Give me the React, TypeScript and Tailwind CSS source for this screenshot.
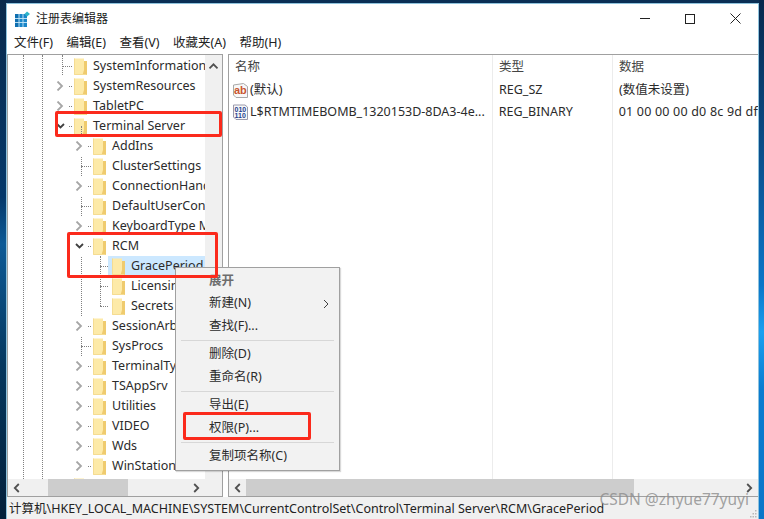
const font = "font-['Noto_Sans','Noto_Sans_CJK_SC',sans-serif]";

function Folder() {
  return (
    <svg width="13" height="17" viewBox="0 0 13 17" className="shrink-0">
      <path d="M0 0.5 H10 V3 H13 V17 H0 Z" fill="#fdeaa8" />
      <path d="M10 0.5 V12 L8.5 17 H13 V3 H10 Z" fill="#efcb6e" />
      <path d="M0.5 0.5 V16.5 H12.5" fill="none" stroke="#f5dc92" />
    </svg>
  );
}

function Chevron({ open }: { open?: boolean }) {
  return (
    <svg width="10" height="10" viewBox="0 0 10 10" className="shrink-0">
      {open ? (
        <path d="M2 3 L5.5 6.5 L9 3" fill="none" stroke="#404040" strokeWidth="1.8" />
      ) : (
        <path d="M2.5 0.5 L7 5 L2.5 9.5" fill="none" stroke="#a6a6a6" strokeWidth="1.8" />
      )}
    </svg>
  );
}

type Row = { t: string; lv: 3 | 4 | 5; c?: "open" | "closed"; sel?: boolean };

const rows: Row[] = [
  { t: "SystemInformation", lv: 3 },
  { t: "SystemResources", lv: 3, c: "closed" },
  { t: "TabletPC", lv: 3, c: "closed" },
  { t: "Terminal Server", lv: 3, c: "open" },
  { t: "AddIns", lv: 4, c: "closed" },
  { t: "ClusterSettings", lv: 4 },
  { t: "ConnectionHandler", lv: 4, c: "closed" },
  { t: "DefaultUserConfiguration", lv: 4 },
  { t: "KeyboardType Mapping", lv: 4, c: "closed" },
  { t: "RCM", lv: 4, c: "open" },
  { t: "GracePeriod", lv: 5, sel: true },
  { t: "Licensing Core", lv: 5 },
  { t: "Secrets", lv: 5 },
  { t: "SessionArbitration", lv: 4, c: "closed" },
  { t: "SysProcs", lv: 4 },
  { t: "TerminalTypes", lv: 4, c: "closed" },
  { t: "TSAppSrv", lv: 4, c: "closed" },
  { t: "Utilities", lv: 4, c: "closed" },
  { t: "VIDEO", lv: 4, c: "closed" },
  { t: "Wds", lv: 4, c: "closed" },
  { t: "WinStations", lv: 4, c: "closed" },
  { t: "", lv: 3 },
];

const padFor = { 3: "pl-[47px]", 4: "pl-[66px]", 5: "pl-[85px]" };

function TreeRow({ r }: { r: Row }) {
  return (
    <div className={`flex h-5 items-center whitespace-nowrap ${padFor[r.lv]}`}>
      <span className="flex h-5 w-[19px] shrink-0 items-center">
        {r.c ? (
          <>
            <span className="relative flex h-5 w-[14px] shrink-0 items-center bg-white">
              <Chevron open={r.c === "open"} />
            </span>
            <span className="h-0 w-[3px] border-t border-dotted border-[#808080]" />
          </>
        ) : r.t ? (
          <>
            <span className="w-[7px] shrink-0" />
            <span className={`h-0 border-t border-dotted border-[#808080] ${r.lv === 5 ? "w-[8px]" : "w-[10px]"}`} />
          </>
        ) : null}
      </span>
      <span className={`flex h-5 items-center ${r.sel ? "-ml-[4px] bg-[#cce8ff] pl-[4px]" : ""}`}>
        <Folder />
        <span className="pl-[6px] pr-[4px] text-[12.5px] text-[#2b2b2b]">{r.t}</span>
      </span>
    </div>
  );
}

function DotLine({ x, top, h }: { x: string; top: string; h: string }) {
  return <div className={`absolute border-l border-dotted border-[#808080] ${x} ${top} ${h}`} />;
}

function MenuItem({ t, arrow, dim }: { t: string; arrow?: boolean; dim?: boolean }) {
  return (
    <div className={`flex h-[22.5px] items-center justify-between pl-[33px] pr-[10px] text-[12.5px] ${dim ? "font-semibold text-[#6d6d6d]" : "text-[#2b2b2b]"}`}>
      <span>{t}</span>
      {arrow && (
        <svg width="6" height="10" viewBox="0 0 6 10">
          <path d="M1 1 L5 5 L1 9" fill="none" stroke="#404040" />
        </svg>
      )}
    </div>
  );
}

function Sep() {
  return <div className="mx-[5px] mb-[3px] mt-[2px] border-t border-[#d7d7d7]" />;
}

function Chevron2() {
  return (
    <svg width="7" height="10" viewBox="0 0 7 10">
      <path d="M1.2 1 L5.2 5 L1.2 9" fill="none" stroke="#505050" strokeWidth="1.8" />
    </svg>
  );
}

function ScrollH({ thumbClass, corner }: { thumbClass: string; corner?: boolean }) {
  return (
    <div className="flex h-[17px] shrink-0 items-center bg-[#f0f0f0]">
      <span className="flex w-[17px] shrink-0 rotate-180 justify-center"><Chevron2 /></span>
      <div className="h-full flex-1">
        <div className={`h-full bg-[#cdcdcd] ${thumbClass}`} />
      </div>
      <span className="flex w-[17px] shrink-0 justify-center"><Chevron2 /></span>
      {corner && <span className="w-[17px] shrink-0" />}
    </div>
  );
}

export default function App() {
  return (
    <div className={`${font} flex h-[519px] w-[764px] overflow-hidden bg-[#0a2f55] pt-[3px]`}>
      <div className="-mt-[3px] w-[6px] shrink-0 bg-[linear-gradient(to_bottom,#0a2a4c_0%,#05386a_38%,#0d5a96_47%,#05385f_70%,#031f3a_100%)]" />
      <div className="relative flex min-w-0 flex-1 flex-col overflow-hidden border-x border-t border-x-[#8fc3dd] border-t-[#8fc3dd] bg-white">
        {/* title bar */}
        <div className="flex h-[29px] shrink-0 items-center pl-[8px]">
          <svg width="15" height="16" viewBox="0 0 15 16" className="mt-[1px]">
            <rect x="0" y="3" width="12" height="13" fill="#1a86c8" />
            <rect x="0" y="3" width="4" height="13" fill="#0f6fb0" />
            <path d="M0 7.5 H12 M0 11.5 H12 M4 3 V16 M8 3 V16" stroke="#c8e8f8" strokeWidth="0.9" />
            <path d="M12 0.5 L15 3 L12 5.5 L9.5 3 Z" fill="#2fb5c9" />
          </svg>
          <span className="ml-[6px] text-[12px] text-[#1a1a1a]">注册表编辑器</span>
          <div className="ml-auto flex items-center gap-[35px] pr-[17px]">
            <div className="h-px w-[10px] bg-[#222]" />
            <div className="h-[10px] w-[10px] border border-[#222]" />
            <svg width="11" height="11" viewBox="0 0 11 11"><path d="M0.5 0.5 L10.5 10.5 M10.5 0.5 L0.5 10.5" stroke="#222" /></svg>
          </div>
        </div>
        {/* menu bar */}
        <div className="flex h-[21px] shrink-0 items-center gap-[13.5px] pl-[7px] text-[12.5px] text-[#222]">
          <span>文件(F)</span>
          <span>编辑(E)</span>
          <span>查看(V)</span>
          <span>收藏夹(A)</span>
          <span>帮助(H)</span>
        </div>
        {/* panes */}
        <div className="flex min-h-0 flex-1 gap-[5px] bg-white">
          <div className="flex w-[216px] shrink-0 flex-col border border-[#a0a0a0]">
            <div className="relative flex min-h-0 flex-1">
              <div className="relative min-w-0 flex-1 overflow-hidden pt-[1px]">
                <DotLine x="left-[15px]" top="top-0" h="h-full" />
                <DotLine x="left-[34px]" top="top-0" h="h-full" />
                <DotLine x="left-[54px]" top="top-0" h="h-[70px]" />
                <DotLine x="left-[73px]" top="top-[71px]" h="h-[340px]" />
                <DotLine x="left-[92px]" top="top-[201px]" h="h-[50px]" />
                {rows.map((r, i) => (
                  <TreeRow key={i} r={r} />
                ))}
              </div>
              <div className="flex w-[17px] shrink-0 flex-col items-center justify-between bg-[#f0f0f0] py-[6px]">
                <span className="-rotate-90"><Chevron2 /></span>
                <span className="rotate-90"><Chevron2 /></span>
              </div>
            </div>
            <ScrollH thumbClass="ml-[23px] w-[80px]" corner />
          </div>
          <div className="flex min-w-0 flex-1 flex-col border-y border-l border-[#a0a0a0]">
            <div className="relative min-h-0 flex-1 overflow-hidden text-[12.5px] text-[#2b2b2b]">
              <div className="flex h-[24px] pt-[1px] text-[#444]">
                <div className="flex w-[264px] items-center pl-[6px]">名称</div>
                <div className="flex w-[120px] items-center pl-[6px]">类型</div>
                <div className="flex flex-1 items-center pl-[6px]">数据</div>
              </div>
              <div className="absolute bottom-0 left-[263px] top-0 border-l border-[#ececec]" />
              <div className="absolute bottom-0 left-[383px] top-0 border-l border-[#ececec]" />
              <div className="flex h-[22px] items-center whitespace-nowrap">
                <div className="flex w-[264px] items-center pl-[4px]">
                  <svg width="15" height="15" viewBox="0 0 15 15" className="mr-[2px]">
                    <path d="M0.5 2 L10.5 0.5 L14.5 3.5 V14.5 H3 L0.5 12 Z" fill="#f8f8f8" stroke="#a8a8a8" />
                    <text x="1" y="10.5" fontSize="11" fontWeight="700" fill="#c9552f" fontFamily="Liberation Sans">ab</text>
                  </svg>
                  (默认)
                </div>
                <div className="w-[120px] pl-[6px]">REG_SZ</div>
                <div className="pl-[6px]">(数值未设置)</div>
              </div>
              <div className="flex h-[22px] items-center whitespace-nowrap">
                <div className="flex w-[264px] items-center overflow-hidden pl-[4px]">
                  <svg width="15" height="16" viewBox="0 0 15 16" className="mr-[2px] shrink-0">
                    <path d="M0.5 1 H12 L14.5 3 V15.5 H3 L0.5 13 Z" fill="#f8f8f8" stroke="#9a9aac" />
                    <text x="1.5" y="7.5" fontSize="7" fontWeight="700" fill="#1f3f8f" fontFamily="Liberation Sans">010</text>
                    <text x="1.5" y="14" fontSize="7" fontWeight="700" fill="#1f3f8f" fontFamily="Liberation Sans">110</text>
                  </svg>
                  L$RTMTIMEBOMB_1320153D-8DA3-4e...
                </div>
                <div className="w-[120px] pl-[6px]">REG_BINARY</div>
                <div className="pl-[6px] tracking-[0.2px]">01 00 00 00 d0 8c 9d df</div>
              </div>
            </div>
            <ScrollH thumbClass="w-[388px]" />
          </div>
        </div>
        {/* status bar */}
        <div className="relative flex h-[22px] shrink-0 items-center whitespace-nowrap bg-[#f0f0f0] pl-[2px] pt-[3px] text-[12.5px] text-[#222]">
          计算机\HKEY_LOCAL_MACHINE\SYSTEM\CurrentControlSet\Control\Terminal Server\RCM\GracePeriod
          <svg width="8" height="8" viewBox="0 0 8 8" className="absolute bottom-[1px] right-[1px]">
            <path d="M6 0h1.5v1.5H6zM3.5 3H5v1.5H3.5zM6 3h1.5v1.5H6zM1 6h1.5v1.5H1zM3.5 6H5v1.5H3.5zM6 6h1.5v1.5H6z" fill="#b8b8b8" />
          </svg>
        </div>

        {/* context menu */}
        <div className="absolute left-[168px] top-[263px] w-[165px] border border-[#a0a0a0] bg-[#f2f2f2] py-[2px] shadow-[1px_1px_1px_rgba(0,0,0,0.15)]">
          <MenuItem t="展开" dim />
          <MenuItem t="新建(N)" arrow />
          <MenuItem t="查找(F)..." />
          <Sep />
          <MenuItem t="删除(D)" />
          <MenuItem t="重命名(R)" />
          <Sep />
          <MenuItem t="导出(E)" />
          <MenuItem t="权限(P)..." />
          <Sep />
          <MenuItem t="复制项名称(C)" />
        </div>

        {/* red annotations */}
        <div className="absolute left-[48px] top-[107px] h-[25.5px] w-[167px] rounded-[2px] border-[3px] border-[#fb2a1c]" />
        <div className="absolute left-[60px] top-[228px] h-[46px] w-[151px] rounded-[2px] border-[3px] border-[#fb2a1c]" />
        <div className="absolute left-[176px] top-[408px] h-[28px] w-[128px] rounded-[2px] border-[3px] border-[#fb2a1c]" />

        {/* watermark */}
        <div className="absolute right-[9px] top-[484px] text-[15.5px] text-[#8c8c8c]/80">CSDN @zhyue77yuyi</div>
      </div>
      <div className="-mt-[3px] w-[5px] shrink-0 bg-[linear-gradient(to_bottom,#08284c_0%,#0a4f8c_30%,#0a76c8_55%,#1aa0f0_64%,#0a7cd0_75%,#0a76c8_100%)]" />
    </div>
  );
}
